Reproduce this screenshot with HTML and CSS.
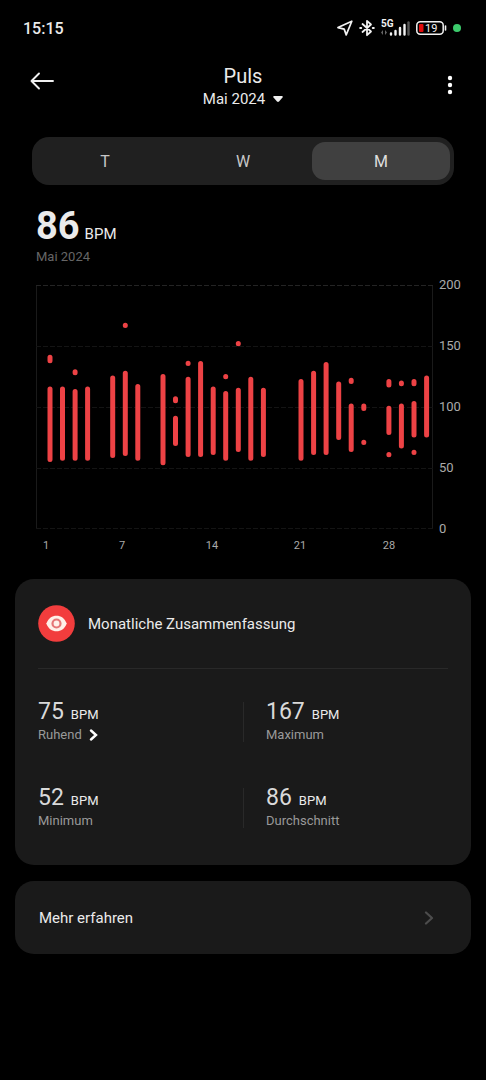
FILE: index.html
```html
<!DOCTYPE html>
<html lang="de">
<head>
<meta charset="utf-8">
<meta name="viewport" content="width=device-width, initial-scale=1">
<title>Puls</title>
<link rel="stylesheet" href="styles.css">
</head>
<body>
<div class="status">
  <span class="clock">15:15</span>
  <div class="status-icons">
    <svg width="16" height="16" viewBox="0 0 16 16" fill="none" stroke="#f2f2f2" stroke-width="1.7" stroke-linejoin="round" aria-hidden="true"><path d="M14.8 1.2 1 7.6l6.2 1.5 2 5.8z"/></svg>
    <svg width="16" height="18" viewBox="0 0 16 18" fill="none" stroke="#f2f2f2" stroke-width="1.8" stroke-linejoin="round" stroke-linecap="round" aria-hidden="true"><path d="m3.5 5 8.5 7.500L8 16.200V1.800L12 5.500 3.500 13"/><path d="M1.200 9h1M13.800 9h1" stroke-width="2"/></svg>
    <svg class="signal" width="29" height="20" viewBox="0 -2 29 20" aria-hidden="true">
      <text x="0" y="7" class="net">5G</text>
      <path d="m0 12.500 2-2.500v5M6 12.500 4 15v-5" fill="#666"/>
      <path d="M10 14.500v-1M14.500 14.500V11M19 14.500V8M23.500 14.500V5" stroke="#f2f2f2" stroke-width="2.400" stroke-linecap="round"/>
      <path d="M27.500 14.500V2.500" stroke="#555" stroke-width="2.400" stroke-linecap="round"/>
    </svg>
    <svg width="31" height="14" viewBox="0 0 31 14" aria-hidden="true">
      <rect x=".8" y=".8" width="26.400" height="12.400" rx="3.500" fill="none" stroke="#f2f2f2" stroke-width="1.500"/>
      <rect x="3" y="3" width="4.500" height="8" rx="1" fill="#e00b0b"/>
      <path d="M29.500 5v4" stroke="#f2f2f2" stroke-width="1.600" stroke-linecap="round"/>
      <text x="9" y="11" class="charge">19</text>
    </svg>
    <span class="live"></span>
  </div>
</div>

<header class="header">
  <button class="icon-button" aria-label="Zurück">
    <svg width="24" height="18" viewBox="0 0 24 18" fill="none" stroke="#f0f0f0" stroke-width="1.900" stroke-linecap="round" stroke-linejoin="round"><path d="M23 9H1.500M9 1.500 1.500 9 9 16.500"/></svg>
  </button>
  <div class="heading">
    <h1>Puls</h1>
    <button class="month">Mai 2024
      <svg width="10" height="6" viewBox="0 0 10 6" fill="#f0f0f0" aria-hidden="true"><path d="M1 0h8q1.200.5.500 1.500L6 5.500q-1 .8-2 0L.5 1.500Q-.2.500 1 0z"/></svg>
    </button>
  </div>
  <button class="icon-button more" aria-label="Mehr">
    <svg width="6" height="20" viewBox="0 0 6 20" fill="#fff"><circle cx="3" cy="3" r="2.200"/><circle cx="3" cy="10" r="2.200"/><circle cx="3" cy="17" r="2.200"/></svg>
  </button>
</header>

<main>
  <nav class="tabs" aria-label="Zeitraum">
    <button class="tab">T</button>
    <button class="tab">W</button>
    <button class="tab active" aria-pressed="true">M</button>
  </nav>

  <section class="overview">
    <p class="average"><strong>86</strong> <span>BPM</span></p>
    <p class="period">Mai 2024</p>
    <svg class="chart" viewBox="36 276 426 280" role="img" aria-label="Puls im Mai 2024">
      <path class="frame" d="M36.500 285V529M432.500 285V529"/>
      <path class="grid top" d="M36 285.500H433"/>
      <path class="grid" d="M36 346.500H433M36 407.500H433M36 468.500H433M36 528.500H433"/>
      <path class="bars" d="M50 389V459.500M50 357.300V360.700M62.500 389V458.200M75.100 391.600V458.200M75.100 371.700V372.700M87.600 389V458.200M112.700 378V455.400M125.300 373.300V453.400M125.300 325.300V325.400M137.800 386.600V458.200M163 376.600V462.700M175.500 418.300V443.400M175.500 398.700V400.700M188.100 379.300V454.400M188.100 363.300V363.400M200.600 363.600V454.400M213.200 389V452.400M225.700 393.600V458.200M225.700 376.600V376.700M238.300 390.300V449.400M238.300 343.600V343.700M250.800 379.300V458.200M263.400 390.300V454.400M301 381.600V458.200M313.600 373.300V452.400M326.100 364.600V452.400M338.700 384V437.400M351.200 406V449.400M351.200 380.300V381.400M363.800 406V408.400M363.800 442.300V442.400M388.900 408.300V432.400M388.900 381.600V385M388.900 454.600V454.700M401.400 406V446M401.400 383V383.700M414 403.600V435M414 381.600V383.700M414 452.300V452.400M426.600 378V435"/>
      <g class="scale">
        <text x="439" y="289">200</text><text x="439" y="350">150</text><text x="439" y="411">100</text><text x="439" y="472">50</text><text x="439" y="533">0</text>
      </g>
      <g class="days">
        <text x="46" y="549">1</text><text x="122" y="549">7</text><text x="212" y="549">14</text><text x="300" y="549">21</text><text x="389" y="549">28</text>
      </g>
    </svg>
  </section>

  <section class="card summary">
    <div class="summary-head">
      <svg width="37" height="37" viewBox="0 0 37 37" aria-hidden="true"><circle cx="18.500" cy="18.500" r="18.300" fill="#f23d3d"/><path d="M8.300 18.500C10.500 13 14 10.700 18.500 10.700S26.500 13 28.700 18.500C26.500 24 23 26.300 18.500 26.300S10.500 24 8.300 18.500z" fill="#fff0e8"/><circle cx="18.500" cy="18.500" r="4" fill="#fff0e8" stroke="#e57676" stroke-width="2.200"/></svg>
      <h2>Monatliche Zusammenfassung</h2>
    </div>
    <div class="stats">
      <div class="stat">
        <p class="value"><b>75</b> <span>BPM</span></p>
        <button class="label">Ruhend
          <svg width="9" height="12" viewBox="0 0 9 12" fill="none" stroke="#fff" stroke-width="2.400" stroke-linecap="round" aria-hidden="true"><path d="m2 1.500 5 4.500-5 4.500"/></svg>
        </button>
      </div>
      <div class="stat">
        <p class="value"><b>167</b> <span>BPM</span></p>
        <p class="label">Maximum</p>
      </div>
      <div class="stat">
        <p class="value"><b>52</b> <span>BPM</span></p>
        <p class="label">Minimum</p>
      </div>
      <div class="stat">
        <p class="value"><b>86</b> <span>BPM</span></p>
        <p class="label">Durchschnitt</p>
      </div>
    </div>
  </section>

  <a class="card learn" href="#">
    <span>Mehr erfahren</span>
    <svg width="10" height="14" viewBox="0 0 10 14" fill="none" stroke="#4c4c4c" stroke-width="2.200" stroke-linecap="round" stroke-linejoin="round" aria-hidden="true"><path d="m2 1.500 6 5.500-6 5.500"/></svg>
  </a>
</main>
</body>
</html>
```

FILE: styles.css
```css
* { box-sizing: border-box; }

body {
  margin: 0;
  background: #000;
  color: #ebebeb;
  font-family: Roboto, "Noto Sans", sans-serif;
  font-size: 15px;
}

h1, h2, p { margin: 0; font-weight: 400; }

button {
  padding: 0;
  border: 0;
  background: none;
  color: inherit;
  font: inherit;
  cursor: pointer;
}

svg { display: block; flex: none; }

.status {
  display: flex;
  align-items: center;
  justify-content: space-between;
  height: 56px;
  padding: 0 25px 0 23px;
}
.clock { font-size: 16px; font-weight: 500; }
.status-icons { display: flex; align-items: center; gap: 6px; }
.net { fill: #f2f2f2; font-size: 10px; font-weight: 700; }
.charge { fill: #f2f2f2; font-size: 11px; }
.live { width: 8px; height: 8px; border-radius: 50%; background: #3ccb6c; }

.header {
  display: grid;
  grid-template-columns: 24px 1fr 24px;
  padding: 8px 30px 0;
}
.icon-button { display: flex; align-self: start; padding-top: 8px; }
.more { justify-content: flex-end; padding: 11px 3px 0 0; }
.heading { display: flex; flex-direction: column; align-items: center; }
.heading h1 { font-size: 20px; line-height: 24px; }
.month { display: flex; align-items: center; gap: 8px; line-height: 22px; }

.tabs {
  display: grid;
  grid-template-columns: repeat(3, 1fr);
  height: 48px;
  margin: 27px 32px 0;
  padding: 5px 4px;
  border-radius: 17px;
  background: #202020;
}
.tab { border-radius: 13px; color: #c8c8c8; font-size: 16px; }
.tab.active { background: #404040; color: #dedede; }

.overview { padding: 18px 24px 0 36px; }
.average { display: flex; align-items: baseline; gap: 5px; line-height: 16px; }
.average strong { font-size: 38px; font-weight: 700; line-height: 46px; }
.period { color: #666; font-size: 13px; line-height: 16px; }
.chart { width: 100%; height: auto; margin-top: 11px; }
.frame, .grid { fill: none; stroke: #1a1a1a; stroke-width: 1; }
.grid { stroke-dasharray: 5 2; stroke: #141414; }
.grid.top { stroke: #242424; }
.bars { fill: none; stroke: #ed4245; stroke-width: 5; stroke-linecap: round; }
.scale { fill: #aaa; font-size: 13px; }
.days { fill: #aaa; font-size: 11px; text-anchor: middle; }

.card { margin: 0 15px 16px; border-radius: 19px; background: #1a1a1a; }
.summary { margin-top: 23px; padding: 26px 23px 35px; }
.summary-head {
  display: flex;
  align-items: center;
  gap: 13px;
  padding-bottom: 26px;
  border-bottom: 1px solid #292929;
}
.summary h2 { font-size: 15px; }
.stats { display: grid; grid-template-columns: 1fr 1fr; row-gap: 39px; padding-top: 28px; }
.stat { display: flex; flex-direction: column; align-items: flex-start; }
.stat:nth-child(even) {
  padding-left: 23px;
  background: linear-gradient(#292929, #292929) 0 5px / 1px 40px no-repeat;
}
.value { display: flex; align-items: baseline; gap: 7px; font-size: 13px; line-height: 16px; }
.value b { color: #d9d9d9; font-size: 23px; font-weight: 400; line-height: 29px; }
.label { display: flex; align-items: center; gap: 7px; color: #999; font-size: 13px; line-height: 18px; }

.learn {
  display: flex;
  align-items: center;
  justify-content: space-between;
  height: 73px;
  padding: 0 37px 0 24px;
  color: #ebebeb;
  text-decoration: none;
}
```
